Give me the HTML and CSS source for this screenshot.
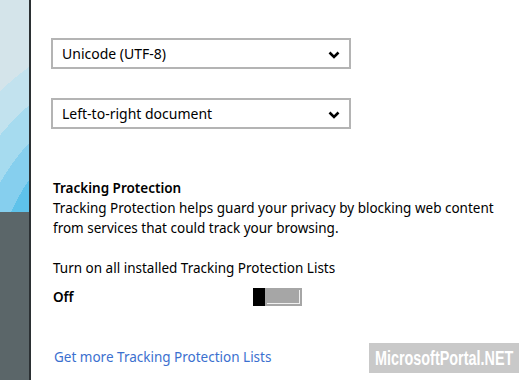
FILE: index.html
```html
<!DOCTYPE html>
<html lang="en">
<head>
    <meta charset="UTF-8">
    <title>Settings - Tracking Protection</title>
    <link rel="stylesheet" href="styles.css">
</head>
<body>
    <div class="page">
        <div class="side">
            <div class="side-art"></div>
            <div class="side-base"></div>
        </div>
        <div class="main">
            <div class="select">
                <span>Unicode (UTF-8)</span>
                <svg class="chev" width="12" height="8" viewBox="0 0 12 8"><path d="M1.5 1.5 L6 6 L10.5 1.5" fill="none" stroke="#000" stroke-width="2.6"/></svg>
            </div>
            <div class="select">
                <span>Left-to-right document</span>
                <svg class="chev" width="12" height="8" viewBox="0 0 12 8"><path d="M1.5 1.5 L6 6 L10.5 1.5" fill="none" stroke="#000" stroke-width="2.6"/></svg>
            </div>

            <h3 class="title">Tracking Protection</h3>
            <p class="desc">Tracking Protection helps guard your privacy by blocking web content from services that could track your browsing.</p>

            <p class="label">Turn on all installed Tracking Protection Lists</p>
            <div class="toggle-row">
                <span class="state">Off</span>
                <div class="toggle"><div class="thumb"></div><div class="track"></div></div>
            </div>

            <a class="link" href="#">Get more Tracking Protection Lists</a>
        </div>
    </div>
    <div class="watermark"><span>MicrosoftPortal.NET</span></div>
</body>
</html>
```
FILE: styles.css
```css
body {
    margin: 0;
    font-family: "Noto Sans", "Open Sans", sans-serif;
    font-size: 13.5px;
    color: #000;
    background: #fff;
    overflow: hidden;
}
.page {
    display: flex;
    height: 380px;
}
.side {
    width: 29px;
    border-right: 2px solid #2b3033;
    display: flex;
    flex-direction: column;
}
.side-art {
    height: 212px;
    background:
        radial-gradient(circle at 190px 290px,
            #1aa6df 0 175px,
            #5ec2ea 175px 195px,
            #86cfee 195px 218px,
            #a6dbef 218px 245px,
            #c2e2ee 245px 275px,
            #d4e4ea 275px);
}
.side-base {
    flex: 1;
    background: #5b6669;
}
.main {
    flex: 1;
    padding: 38px 0 0 20px;
}
.select {
    box-sizing: border-box;
    width: 300px;
    height: 31px;
    border: 2px solid #b4b4b4;
    display: flex;
    align-items: center;
    justify-content: space-between;
    padding: 0 0 0 9px;
    margin-bottom: 29px;
    font-size: 14px;
}
.chev {
    margin: 2px 9px 0 0;
}
.title {
    margin: 49px 0 0 2px;
    font-size: 13.5px;
    font-weight: 600;
    line-height: 20px;
}
.desc {
    margin: 0 0 0 2px;
    width: 450px;
    line-height: 20px;
}
.label {
    margin: 20px 0 0 2px;
    line-height: 20px;
}
.toggle-row {
    display: flex;
    align-items: center;
    margin: 10px 0 0 2px;
}
.state {
    width: 200px;
    font-weight: 600;
}
.toggle {
    display: flex;
    width: 49px;
    height: 18px;
}
.thumb {
    width: 12px;
    background: #000;
}
.track {
    flex: 1;
    background: #a6a6a6;
    border: 2px solid #a6a6a6;
    box-shadow: inset -1px -1px 0 #f0f0f0;
}
.link {
    display: block;
    margin: 42px 0 0 3px;
    color: #3b70cf;
    text-decoration: none;
}
.watermark {
    position: absolute;
    left: 369px;
    top: 343px;
    width: 150px;
    height: 30px;
    background: #c9c9c9;
    color: #fff;
    font-family: "Liberation Sans", sans-serif;
    font-weight: bold;
    font-size: 20px;
    line-height: 30px;
    text-align: center;
    overflow: hidden;
}
.watermark span {
    display: inline-block;
    transform: scaleX(0.72);
    transform-origin: center;
    white-space: nowrap;
    margin: 0 -40px;
}
```
